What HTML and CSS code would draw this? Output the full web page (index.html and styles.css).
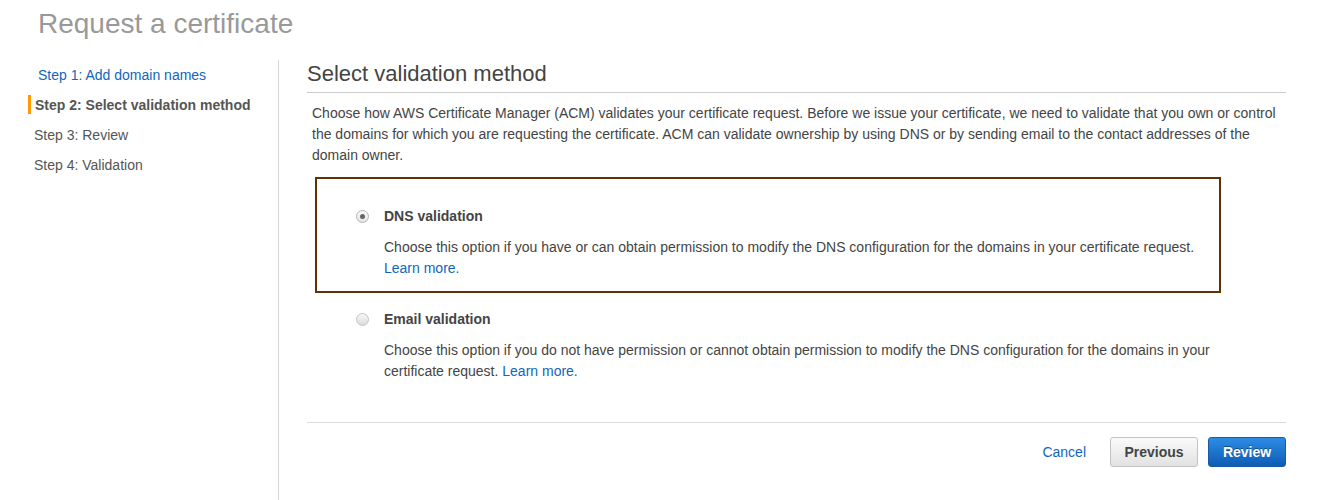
FILE: index.html
```html
<!DOCTYPE html>
<html>
<head>
<meta charset="utf-8">
<link rel="stylesheet" href="styles.css">
</head>
<body>
<h1 class="page-title">Request a certificate</h1>
<div class="layout">
  <nav class="steps">
    <a class="step step-link" href="#">Step 1: Add domain names</a>
    <div class="step step-active">Step 2: Select validation method</div>
    <div class="step">Step 3: Review</div>
    <div class="step">Step 4: Validation</div>
  </nav>
  <main class="main">
    <h2 class="section-title">Select validation method</h2>
    <p class="intro">Choose how AWS Certificate Manager (ACM) validates your certificate request. Before we issue your certificate, we need to validate that you own or control the domains for which you are requesting the certificate. ACM can validate ownership by using DNS or by sending email to the contact addresses of the domain owner.</p>
    <div class="option option-selected">
      <span class="radio radio-checked"></span>
      <div class="option-body">
        <div class="option-title">DNS validation</div>
        <div class="option-desc">Choose this option if you have or can obtain permission to modify the DNS configuration for the domains in your certificate request. <a href="#" class="link">Learn more.</a></div>
      </div>
    </div>
    <div class="option option-plain">
      <span class="radio"></span>
      <div class="option-body">
        <div class="option-title">Email validation</div>
        <div class="option-desc">Choose this option if you do not have permission or cannot obtain permission to modify the DNS configuration for the domains in your certificate request. <a href="#" class="link">Learn more.</a></div>
      </div>
    </div>
    <div class="footer">
      <a href="#" class="cancel">Cancel</a>
      <button class="btn btn-secondary">Previous</button>
      <button class="btn btn-primary">Review</button>
    </div>
  </main>
</div>
</body>
</html>
```
FILE: styles.css
```css
html, body {
  margin: 0;
  padding: 0;
  background: #fff;
}
body {
  font-family: "Liberation Sans", Arial, sans-serif;
  font-size: 14px;
  color: #444;
  width: 1319px;
  overflow: hidden;
}
a { text-decoration: none; }
.page-title {
  margin: 0;
  padding: 8px 0 0 38px;
  font-size: 28px;
  line-height: 32px;
  font-weight: normal;
  color: #999;
  height: 32px;
}
.layout {
  display: flex;
  margin-top: 20px;
}
.steps {
  width: 278px;
  min-height: 440px;
  border-right: 1px solid #d5d5d5;
  display: flex;
  flex-direction: column;
}
.step {
  height: 30px;
  line-height: 30px;
  padding-left: 34px;
  color: #555;
  font-size: 14px;
  position: relative;
}
.step-link {
  color: #1166bb;
  padding-left: 38px;
  display: block;
}
.step-active {
  font-weight: bold;
  padding-left: 35px;
}
.step-active::before {
  content: "";
  position: absolute;
  left: 28px;
  top: 5px;
  width: 3px;
  height: 19px;
  background: #ff9900;
}
.main {
  margin-left: 28px;
  width: 979px;
  padding-top: 1px;
}
.section-title {
  margin: 0;
  font-size: 22px;
  line-height: 26px;
  font-weight: normal;
  color: #444;
  padding-bottom: 5px;
  border-bottom: 1px solid #ccc;
}
.intro {
  margin: 10px 0 0;
  padding: 0 5px;
  line-height: 21px;
}
.option {
  box-sizing: border-box;
  display: flex;
  margin-left: 8px;
  width: 906px;
  border: 2px solid transparent;
}
.option-selected {
  margin-top: 11px;
  border-color: #5e3203;
  padding: 27px 4px 12px 39px;
}
.option-plain {
  padding: 14px 4px 12px 39px;
}
.radio {
  flex: none;
  width: 11px;
  height: 11px;
  margin-top: 4px;
  margin-right: 15px;
  border: 1px solid #c4c4c4;
  border-radius: 50%;
  background: linear-gradient(#f7f7f7, #dcdcdc);
  position: relative;
}
.radio-checked {
  background: linear-gradient(#fafafa, #e4e4e4);
  border-color: #b5b5b5;
}
.radio-checked::after {
  content: "";
  position: absolute;
  left: 3px;
  top: 3px;
  width: 5px;
  height: 5px;
  border-radius: 50%;
  background: #666;
}
.option-body {
  flex: 1;
}
.option-title {
  font-weight: bold;
  line-height: 21px;
  color: #444;
}
.option-desc {
  margin-top: 10px;
  line-height: 21px;
}
.link {
  color: #1166bb;
}
.footer {
  margin-top: 26px;
  border-top: 1px solid #ddd;
  padding-top: 14px;
  display: flex;
  justify-content: flex-end;
  align-items: center;
}
.cancel {
  color: #1166bb;
  margin-right: 24px;
}
.btn {
  font-family: "Liberation Sans", Arial, sans-serif;
  font-size: 14px;
  font-weight: bold;
  height: 30px;
  border-radius: 3px;
  padding: 0;
  cursor: pointer;
}
.btn-secondary {
  width: 88px;
  color: #444;
  border: 1px solid #c3c3c3;
  background: linear-gradient(#fafafa, #e2e2e2);
  margin-right: 10px;
}
.btn-primary {
  width: 78px;
  color: #fff;
  border: 1px solid #1a5aa5;
  background: linear-gradient(#2d8ce4, #0d5cb4);
  text-shadow: 0 -1px 0 rgba(0,0,0,0.4);
}
```
